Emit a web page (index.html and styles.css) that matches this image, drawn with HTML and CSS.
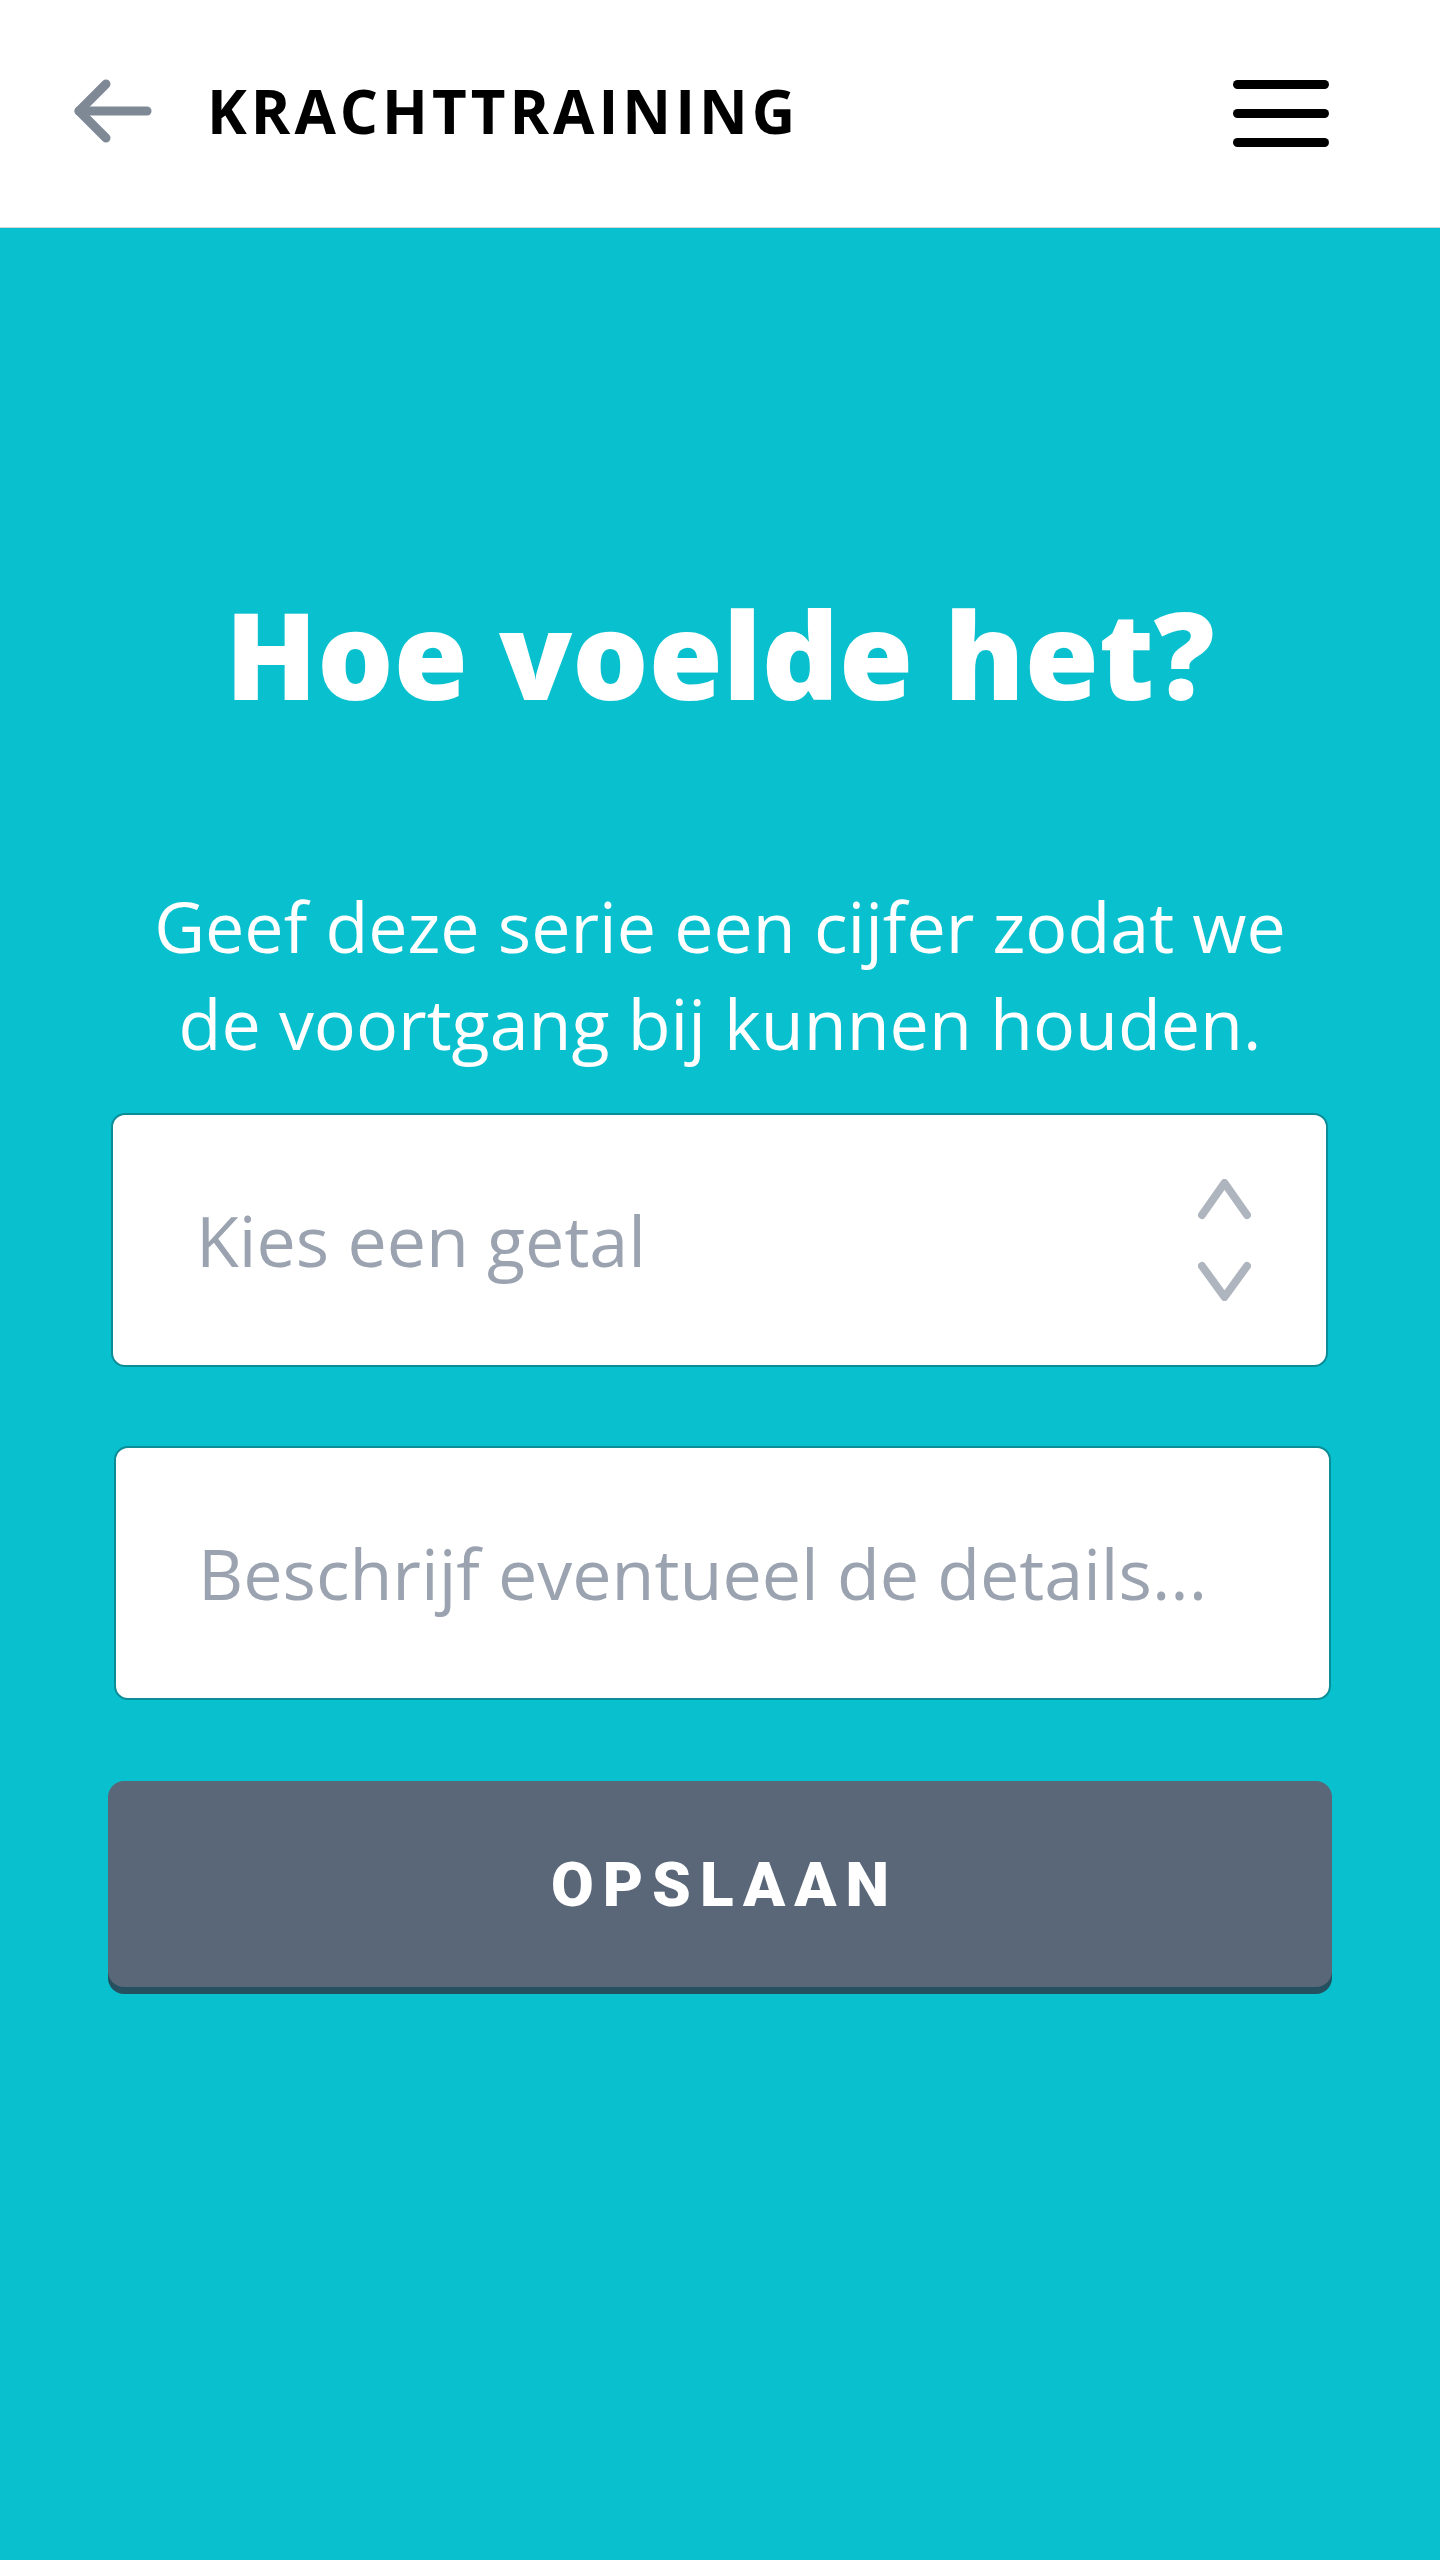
FILE: index.html
```html
<!DOCTYPE html>
<html lang="nl">
<head>
<meta charset="utf-8">
<title>Krachttraining</title>
<link rel="stylesheet" href="styles.css">
</head>
<body>
<header class="topbar">
  <a class="back" href="#" aria-label="Terug">
    <svg width="84" height="64" viewBox="0 0 84 64" fill="none" stroke="#7f8996" stroke-width="9" stroke-linecap="round" stroke-linejoin="round">
      <path d="M6 32 H74"/>
      <path d="M33 5 L6 32 L33 59"/>
    </svg>
  </a>
  <h2 class="title">KRACHTTRAINING</h2>
  <button class="menu" aria-label="Menu">
    <svg width="96" height="68" viewBox="0 0 96 68" fill="none" stroke="#000" stroke-width="9" stroke-linecap="round">
      <path d="M4.5 4.5 H91.5"/>
      <path d="M4.5 33.5 H91.5"/>
      <path d="M4.5 62.5 H91.5"/>
    </svg>
  </button>
</header>
<main class="content">
  <h1 class="heading">Hoe voelde het?</h1>
  <p class="intro">Geef deze serie een cijfer zodat we de voortgang bij kunnen houden.</p>
  <div class="field field-select">
    <span class="placeholder">Kies een getal</span>
    <svg class="spinner" width="53" height="122" viewBox="0 0 53 122" fill="none" stroke="#aeb5be" stroke-width="8" stroke-linecap="round" stroke-linejoin="round">
      <path d="M4 36 L26.5 4 L49 36"/>
      <path d="M4 87 L26.5 118 L49 87"/>
    </svg>
  </div>
  <div class="field field-text">
    <span class="placeholder">Beschrijf eventueel de details...</span>
  </div>
  <button class="save">OPSLAAN</button>
</main>
</body>
</html>
```

FILE: styles.css
```css
html, body {
  margin: 0;
  padding: 0;
}
body {
  background: #09c0ce;
  min-height: 2560px;
  font-family: "Open Sans", "Liberation Sans", sans-serif;
}
.topbar {
  display: flex;
  align-items: center;
  height: 227px;
  background: #ffffff;
  border-bottom: 1px solid #d4d6d8;
  padding: 0 111px 0 73px;
}
.back {
  display: flex;
  align-items: center;
  margin-bottom: 6px;
}
.title {
  margin: 0 0 6px 50px;
  font-family: "Open Sans", sans-serif;
  font-weight: 700;
  font-size: 60px;
  letter-spacing: 4px;
  color: #000;
  flex: 1;
  line-height: 1;
}
.menu {
  border: 0;
  background: none;
  padding: 0;
  display: flex;
}
.content {
  display: flex;
  flex-direction: column;
  padding: 354px 108px 0;
}
.heading {
  margin: 0;
  font-family: "Open Sans", sans-serif;
  font-weight: 800;
  font-size: 120px;
  line-height: 144px;
  text-align: center;
  color: #ffffff;
}
.intro {
  margin: 152px 0 0;
  padding: 0 20px;
  font-family: "Open Sans", sans-serif;
  font-weight: 400;
  font-size: 70px;
  line-height: 97px;
  text-align: center;
  color: #ffffff;
}
.field {
  box-sizing: border-box;
  height: 254px;
  background: #ffffff;
  border: 2px solid #0b8d98;
  border-radius: 14px;
  display: flex;
  align-items: center;
  justify-content: space-between;
}
.placeholder {
  font-family: "Open Sans", sans-serif;
  font-size: 70px;
  color: #9aa3af;
  line-height: 1;
}
.field-select {
  margin: 41px 4px 0 3px;
  padding: 0 75px 0 83px;
}
.field-text {
  margin: 79px 1px 0 6px;
  padding: 0 40px 0 82px;
}
.save {
  margin-top: 81px;
  height: 206px;
  border: 0;
  border-radius: 16px;
  background: #5a6779;
  box-shadow: 0 7px 0 #25505f;
  color: #ffffff;
  font-family: Roboto, "Liberation Sans", sans-serif;
  font-weight: 900;
  font-size: 62px;
  letter-spacing: 9px;
  padding: 0 0 0 9px;
}
```
